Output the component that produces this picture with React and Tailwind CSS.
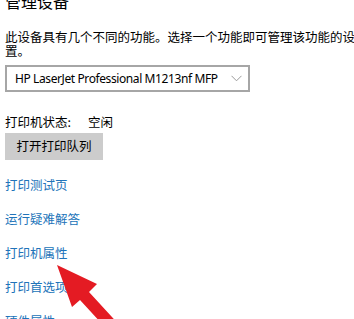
export default function App() {
  const cjk = { fontFamily: '"Noto Sans CJK SC", "Noto Sans", sans-serif' };
  const links = ["打印测试页", "运行疑难解答", "打印机属性", "打印首选项", "硬件属性"];
  return (
    <div className="relative w-[354px] h-[319px] overflow-hidden bg-white text-black" style={cjk}>
      <div className="pl-[5px]">
        <div className="mt-[-8px] h-[18px] leading-[18px] text-[16px] tracking-[0px] whitespace-nowrap">管理设备</div>
        <p className="mt-[20px] w-[352px] text-[12.5px] leading-[14px]">
          此设备具有几个不同的功能。选择一个功能即可管理该功能的设置。
        </p>
        <div className="mt-[7px] w-[245px] h-[27px] border-2 border-[#a6a6a6] flex items-center pl-[8px] pr-[5px] justify-between">
          <span className="text-[12px] tracking-[-0.4px] whitespace-nowrap" style={{ fontFamily: '"Noto Sans", sans-serif' }}>
            HP LaserJet Professional M1213nf MFP
          </span>
          <svg width="11" height="7" viewBox="0 0 11 7" className="mr-[1px] shrink-0">
            <path d="M0.5 0.8 L5.5 5.8 L10.5 0.8" fill="none" stroke="#9a9a9a" strokeWidth="1" />
          </svg>
        </div>
        <div className="mt-[22px] h-[16px] leading-[16px] text-[12.5px] flex whitespace-nowrap">
          <span className="w-[83px]">打印机状态:</span>
          <span>空闲</span>
        </div>
        <div className="mt-[3px] w-[98px] h-[27px] bg-[#cccccc] flex items-center justify-center text-[12.5px]">
          打开打印队列
        </div>
        {links.map((l, i) => (
          <div
            key={l}
            className={(i === 0 ? "mt-[17px]" : "mt-[18px]") + " h-[16px] leading-[16px] text-[12.5px] text-[#2073b9] whitespace-nowrap"}
          >
            {l}
          </div>
        ))}
      </div>
      <svg className="absolute left-0 top-0" width="354" height="319" viewBox="0 0 354 319">
        <polygon
          points="57,265 97,284 89,292 123,329 114,337 80,300 72,307"
          fill="#e41b23"
        />
      </svg>
    </div>
  );
}
